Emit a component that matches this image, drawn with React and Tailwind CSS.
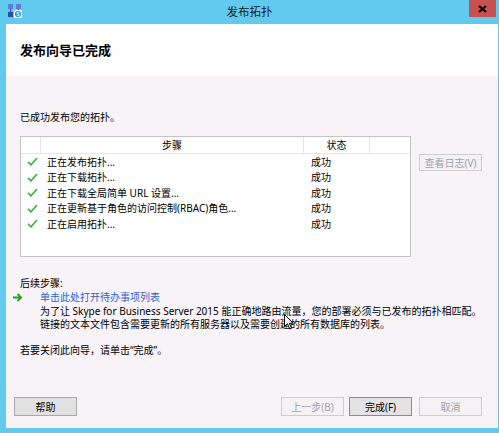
import React from 'react';

// 发布拓扑 wizard – final page
const steps = [
  '正在发布拓扑...',
  '正在下载拓扑...',
  '正在下载全局简单 URL 设置...',
  '正在更新基于角色的访问控制(RBAC)角色...',
  '正在启用拓扑...',
];

const font = { fontFamily: '"Noto Sans", "Noto Sans CJK SC", sans-serif' };

const Check = () => (
  <svg width="11" height="9" viewBox="0 0 11 9" className="block">
    <path d="M1 4.8 L4 7.8 L10 1" fill="none" stroke="#45b545" strokeWidth="1.8" />
  </svg>
);

const AppIcon = () => (
  <svg width="14" height="14" viewBox="0 0 14 14" className="block">
    <rect x="0" y="0" width="5" height="5" fill="#5b7fd6" />
    <rect x="8" y="0" width="5" height="5" fill="#5b7fd6" />
    <rect x="0" y="8" width="5" height="5" fill="#2a4fa8" />
    <path d="M2.5 5 V8 M10.5 5 V8" stroke="#2a4fa8" strokeWidth="1" />
    <rect x="6" y="6" width="8" height="8" rx="1.5" fill="#ffffff" />
    <circle cx="10" cy="10" r="3" fill="#1d8fd8" />
    <text x="10" y="12" fontSize="5" fill="#fff" textAnchor="middle" fontFamily="Liberation Sans, sans-serif" fontWeight="bold">S</text>
  </svg>
);

const Btn = ({ children, disabled, focused, className = '' }) => (
  <button
    className={`h-[19px] w-[63px] text-[10px] leading-none border ${
      disabled
        ? 'bg-[#f4f2f5] border-[#cfcdd0] text-[#a3a1a4]'
        : focused
        ? 'bg-[#e3e3e3] border-[#4a9be8] text-black'
        : 'bg-[#e1e1e1] border-[#a9a9a9] text-black'
    } ${className}`}
  >
    {children}
  </button>
);

export default function App() {
  return (
    <div className="w-[499px] h-[433px] bg-[#62c9ef] flex flex-col text-black" style={font}>
      {/* Title bar */}
      <div className="h-[24px] flex items-start relative">
        <div className="pl-[8px] pt-[4px]">
          <AppIcon />
        </div>
        <div className="absolute left-0 right-0 top-[4px] text-center text-[11.5px] leading-[16px] text-[#1a1a1a]">
          发布拓扑
        </div>
        <div className="ml-auto mr-[3px] w-[27px] h-[17px] bg-[#c75050] flex items-center justify-center">
          <svg width="9" height="8" viewBox="0 0 9 8">
            <path d="M1 1 L8 7 M8 1 L1 7" stroke="#000" strokeWidth="2" />
          </svg>
        </div>
      </div>

      {/* Dialog body */}
      <div className="flex-1 ml-[6px] mr-[1px] mb-[5px] flex flex-col bg-[#f7f3f7] relative">
        <div className="h-[52px] bg-white flex items-center pl-[14px]">
          <h1 className="text-[13px] font-bold leading-none">发布向导已完成</h1>
        </div>

        <div className="pl-[14px] pr-[16px] flex-1 flex flex-col">
          <p className="mt-[33px] text-[10px] leading-[16px]">已成功发布您的拓扑。</p>

          <div className="mt-[11px] flex items-start">
            {/* Table */}
            <div className="w-[391px] h-[121px] bg-white border border-[#c4c4c4] text-[10px]">
              <div className="flex h-[17px] border-b border-[#e4e4ea] leading-[16px]">
                <div className="w-[20px] border-r border-[#e4e4ea]" />
                <div className="w-[263px] border-r border-[#e4e4ea] text-center">步骤</div>
                <div className="w-[66px] border-r border-[#e4e4ea] text-center">状态</div>
                <div className="flex-1" />
              </div>
              {steps.map((s) => (
                <div key={s} className="flex items-center h-[15.5px] leading-none">
                  <div className="w-[21px] flex justify-center pl-[1px]">
                    <Check />
                  </div>
                  <div className="w-[263px] pl-[5px] whitespace-nowrap">{s}</div>
                  <div className="pl-[6px]">成功</div>
                </div>
              ))}
            </div>
            <Btn disabled className="ml-auto mt-[18px] !h-[17px]">查看日志(V)</Btn>
          </div>

          <div className="mt-[19px] text-[10px] leading-[14px]">
            <p>后续步骤:</p>
            <div className="flex items-center -ml-[7px]">
              <svg width="10" height="9" viewBox="0 0 10 9" className="block">
                <path d="M0 4.5 H7 M4.5 1 L8 4.5 L4.5 8" fill="none" stroke="#25a025" strokeWidth="2" />
              </svg>
              <span className="ml-[17px] text-[#2f5fc9]">单击此处打开待办事项列表</span>
            </div>
            <div className="pl-[20px] mt-[1px] leading-[13px] whitespace-nowrap">
              <p>为了让 Skype for Business Server 2015 能正确地路由流量，您的部署必须与已发布的拓扑相匹配。</p>
              <p>链接的文本文件包含需要更新的所有服务器以及需要创建的所有数据库的列表。</p>
            </div>
            <p className="mt-[12px]">若要关闭此向导，请单击“完成”。</p>
          </div>

          <div className="mt-auto mb-[12px] flex items-center -ml-[6px]">
            <Btn>帮助</Btn>
            <Btn disabled className="ml-auto">上一步(B)</Btn>
            <Btn focused className="ml-[5px]">完成(F)</Btn>
            <Btn disabled className="ml-[7px]">取消</Btn>
          </div>
        </div>

        {/* Mouse pointer */}
        <svg width="10" height="16" viewBox="0 0 10 16" className="absolute left-[278px] top-[290px]">
          <path d="M0.5 0.5 V12.5 L3.5 9.8 L5.8 15 L7.6 14.2 L5.3 9.2 H9 Z" fill="#fff" stroke="#000" strokeWidth="1" />
        </svg>
      </div>
    </div>
  );
}
